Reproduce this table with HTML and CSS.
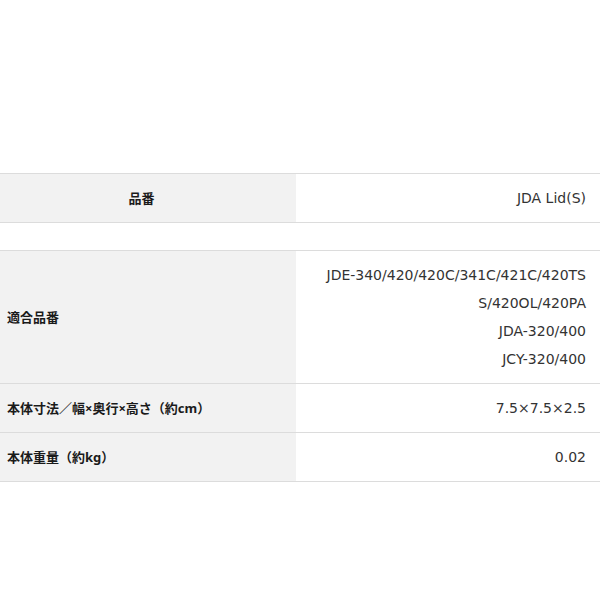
FILE: index.html
```html
<!DOCTYPE html>
<html lang="ja">

<head>
    <meta charset="UTF-8">
    <meta name="viewport" content="width=device-width, initial-scale=1.0">
    <title>仕様</title>
    <link rel="stylesheet" href="styles.css">
</head>

<body>

    <!-- Spec tables -->
    <div class="spec">

        <!-- Product number -->
        <table class="spec-table">
            <tr>
                <th class="head">品番</th>
                <td>JDA Lid(S)</td>
            </tr>
        </table>

        <!-- Details -->
        <table class="spec-table">
            <tr>
                <th>適合品番</th>
                <td>JDE-340/420/420C/341C/421C/420TS<br>S/420OL/420PA<br>JDA-320/400<br>JCY-320/400</td>
            </tr>
            <tr>
                <th>本体寸法／幅×奥行×高さ（約cm）</th>
                <td>7.5×7.5×2.5</td>
            </tr>
            <tr>
                <th>本体重量（約kg）</th>
                <td>0.02</td>
            </tr>
        </table>
    </div>

</body>

</html>
```

FILE: styles.css
```css
/* Page */
body {
    margin: 0;
    padding: 0;
    background-color: #ffffff;
    font-family: "DejaVu Sans", "Noto Sans CJK JP", sans-serif;
    color: #333333;
}

/* Wrapper */
.spec {
    padding-top: 173px;
}

/* Tables */
.spec-table {
    width: 100%;
    border-collapse: collapse;
    border-top: 1px solid #dcdcdc;
    margin-bottom: 27px;
}

.spec-table tr {
    border-bottom: 1px solid #dcdcdc;
}

/* Label cells */
.spec-table th {
    width: 296px;
    box-sizing: border-box;
    background-color: #f2f2f2;
    color: #1a1a1a;
    font-family: "Noto Sans", "Noto Sans CJK JP", sans-serif;
    font-size: 13px;
    font-weight: bold;
    text-align: left;
    padding: 10px 7px;
    line-height: 28px;
}

.spec-table th.head {
    text-align: center;
    padding-right: 20px;
}

/* Value cells */
.spec-table td {
    font-size: 14px;
    text-align: right;
    padding: 10px 14px 10px 10px;
    line-height: 28px;
}
```
